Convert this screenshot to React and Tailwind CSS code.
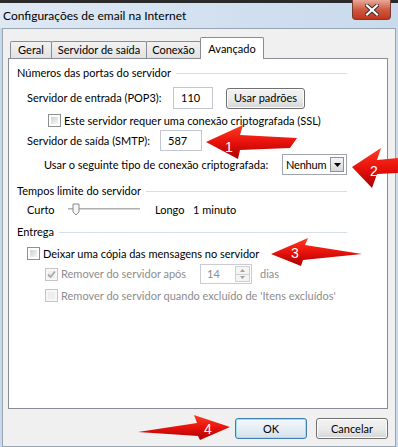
import React from 'react';

function Check({ checked, disabled }) {
  return (
    <span
      className={`relative w-[13px] h-[13px] shrink-0 border ${
        disabled ? 'border-[#c4c4c4] bg-[#f7f7f7]' : 'border-[#8e8f8f] bg-white'
      }`}
    >
      <span
        className={`absolute inset-[2px] ${
          disabled ? 'bg-[#eeeeee]' : 'bg-gradient-to-br from-[#cdd0d6] to-[#f7f7f7]'
        }`}
      />
      {checked && (
        <svg className="absolute inset-0" width="11" height="11" viewBox="0 0 11 11">
          <path d="M2 5.5 L4.5 8 L9 2.5" fill="none" stroke={disabled ? '#a8a8a8' : '#4a5f97'} strokeWidth="1.8" />
        </svg>
      )}
    </span>
  );
}

function GroupLabel({ children }) {
  return (
    <div className="flex items-center h-[16px] pl-[8px] mr-[40px]">
      <span className="whitespace-nowrap">{children}</span>
      <span className="flex-1 ml-[5px] border-t border-[#d5dfe5]" />
    </div>
  );
}

function WinButton({ children, width, isDefault }) {
  return (
    <div
      className={`${width} h-[21px] shrink-0 whitespace-nowrap rounded-[3px] border flex items-center justify-center ${
        isDefault
          ? 'border-[#3c7fb1] bg-gradient-to-b from-[#f3f8fc] via-[#e6eef5] to-[#d3e0ea] shadow-[inset_0_0_0_1px_#9ee0f7]'
          : 'border-[#707070] bg-gradient-to-b from-[#f2f2f2] via-[#ebebeb] to-[#d6d6d6] shadow-[inset_0_0_0_1px_#fcfcfc]'
      }`}
    >
      {children}
    </div>
  );
}

function Tab({ label, width, active }) {
  if (active) {
    return (
      <div className={`${width} h-[22px] -mb-px -ml-px relative z-10 bg-white border border-b-0 border-[#898c95] rounded-t-[2px] flex items-start justify-center pt-[3px] whitespace-nowrap`}>
        {label}
      </div>
    );
  }
  return (
    <div className={`${width} h-[17px] -ml-px first:ml-0 border border-b-0 border-[#898c95] rounded-t-[2px] bg-gradient-to-b from-[#f2f2f2] to-[#e2e2e2] flex items-center justify-center whitespace-nowrap`}>
      {label}
    </div>
  );
}

function Arrows() {
  return (
    <svg className="absolute inset-0 pointer-events-none" width="398" height="447" viewBox="0 0 398 447">
      <defs>
        <linearGradient id="red" x1="0" y1="0" x2="0" y2="1">
          <stop offset="0" stopColor="#ff3b22" />
          <stop offset="0.5" stopColor="#e8120c" />
          <stop offset="1" stopColor="#a80000" />
        </linearGradient>
      </defs>
      <polygon points="206,142 243,125 240,135 297,138 290,148 240,150 238,159" fill="url(#red)" />
      <polygon points="352,167 381,148 377,160 398,158 398,173 377,174 372,188" fill="url(#red)" />
      <polygon points="271,254 308,238 305,245 362,254 303,260 301,266" fill="url(#red)" />
      <polygon points="230,427 194,415 197,423 138,432 198,436 200,440" fill="url(#red)" />
      <g fill="#ffffff" fontFamily="'Liberation Sans', Arial, sans-serif" fontSize="14" textAnchor="middle">
        <text x="229" y="152">1</text>
        <text x="374" y="176">2</text>
        <text x="295" y="258">3</text>
        <text x="208" y="434">4</text>
      </g>
    </svg>
  );
}

export default function App() {
  return (
    <div className="relative w-[398px] h-[447px] overflow-hidden bg-[#c9d9ea] flex flex-col font-['Lato',sans-serif] text-[11px] text-black leading-[16px]">
      <div className="h-[3px] bg-[#2a2a2a]" />
      <div className="h-[25px] flex items-center pl-[3px] bg-gradient-to-r from-[#dfe9f4] via-[#d3e1f0] to-[#c8daec] text-[12px]">
        Configurações de email na Internet
      </div>
      <div className="absolute top-0 left-[352px] w-[39px] h-[20px] rounded-b-[4px] border border-[#7a3a2f] border-t-0 bg-gradient-to-b from-[#e9a898] via-[#cf5a42] to-[#c0351c] flex items-center justify-center">
        <svg width="14" height="12" viewBox="0 0 14 12">
          <path d="M2 1.5 L12 10.5 M12 1.5 L2 10.5" stroke="#3d2a2a" strokeWidth="4" strokeLinecap="square" />
          <path d="M2 1.5 L12 10.5 M12 1.5 L2 10.5" stroke="#ffffff" strokeWidth="2.2" strokeLinecap="square" />
        </svg>
      </div>

      <div className="flex-1 mx-[2px] border border-[#9aa5b2] bg-[#f0f0f0] flex flex-col">
        <div className="flex items-end h-[21px] mt-[8px] pl-[7px]">
          <Tab label="Geral" width="w-[42px]" />
          <Tab label="Servidor de saída" width="w-[96px]" />
          <Tab label="Conexão" width="w-[55px]" />
          <Tab label="Avançado" width="w-[64px]" active />
        </div>

        <div className="h-[351px] ml-[5px] mr-[7px] bg-white border border-[#898c95] flex flex-col pt-[6px] whitespace-nowrap">
          <GroupLabel>Números das portas do servidor</GroupLabel>

          <div className="flex items-center h-[22px] mt-[6px] pl-[18px]">
            <span className="w-[146px] shrink-0">Servidor de entrada (POP3):</span>
            <div className="w-[40px] h-[22px] shrink-0 border border-[#c3c7cf] bg-white flex items-center pl-[7px]">110</div>
            <div className="ml-[13px]">
              <WinButton width="w-[79px]">Usar padrões</WinButton>
            </div>
          </div>

          <div className="flex items-center gap-[3px] h-[13px] mt-[5px] pl-[39px]">
            <Check />
            <span>Este servidor requer uma conexão criptografada (SSL)</span>
          </div>

          <div className="flex items-center h-[21px] mt-[3px] pl-[18px]">
            <span className="w-[133px] shrink-0">Servidor de saída (SMTP):</span>
            <div className="w-[42px] h-[21px] shrink-0 border border-[#c3c7cf] bg-white flex items-center pl-[7px]">587</div>
          </div>

          <div className="flex items-center h-[21px] mt-[3px] pl-[35px]">
            <span className="w-[238px] shrink-0">Usar o seguinte tipo de conexão criptografada:</span>
            <div className="w-[65px] h-[21px] shrink-0 border border-[#a0a4ac] bg-white flex items-center justify-between pl-[3px] pr-[2px]">
              <span className="tracking-[-0.2px]">Nenhum</span>
              <div className="w-[14px] h-[15px] shrink-0 border border-[#8d9199] bg-gradient-to-b from-[#f4f4f4] to-[#d8d8d8] flex items-center justify-center">
                <svg width="7" height="4" viewBox="0 0 7 4">
                  <path d="M0 0 H7 L3.5 4 Z" fill="#000" />
                </svg>
              </div>
            </div>
          </div>

          <div className="mt-[8px]">
            <GroupLabel>Tempos limite do servidor</GroupLabel>
          </div>

          <div className="flex items-center h-[16px] mt-[3px] pl-[18px]">
            <span className="w-[41px] shrink-0">Curto</span>
            <svg width="72" height="14" viewBox="0 0 72 14">
              <rect x="0" y="5" width="72" height="2" fill="#d6d6d6" />
              <rect x="0" y="5" width="72" height="1" fill="#b0b0b0" />
              <path d="M5 1 H11 V9 L8 12 L5 9 Z" fill="#f4f4f4" stroke="#8a8a8a" strokeWidth="1" />
            </svg>
            <span className="ml-[15px] w-[38px] shrink-0">Longo</span>
            <span>1 minuto</span>
          </div>

          <div className="mt-[6px]">
            <GroupLabel>Entrega</GroupLabel>
          </div>

          <div className="flex items-center gap-[3px] h-[13px] mt-[7px] pl-[18px]">
            <Check />
            <span>Deixar uma cópia das mensagens no servidor</span>
          </div>

          <div className="flex items-center h-[20px] mt-[4px] pl-[36px] text-[#8d8d8d]">
            <Check checked disabled />
            <span className="w-[139px] shrink-0 ml-[3px]">Remover do servidor após</span>
            <div className="w-[52px] h-[20px] shrink-0 border border-[#c9ccd2] bg-white flex items-center justify-between pl-[6px] pr-[1px]">
              <span>14</span>
              <div className="w-[15px] h-[16px] flex flex-col border border-[#d0d0d0]">
                <div className="flex-1 flex items-center justify-center bg-[#f4f4f4] border-b border-[#d0d0d0]">
                  <svg width="5" height="3" viewBox="0 0 5 3"><path d="M0 3 H5 L2.5 0 Z" fill="#a0a0a0" /></svg>
                </div>
                <div className="flex-1 flex items-center justify-center bg-[#f4f4f4]">
                  <svg width="5" height="3" viewBox="0 0 5 3"><path d="M0 0 H5 L2.5 3 Z" fill="#a0a0a0" /></svg>
                </div>
              </div>
            </div>
            <span className="ml-[8px]">dias</span>
          </div>

          <div className="flex items-center gap-[3px] h-[13px] mt-[5px] pl-[36px] text-[#8d8d8d]">
            <Check disabled />
            <span>Remover do servidor quando excluído de 'Itens excluídos'</span>
          </div>
        </div>

        <div className="flex justify-end gap-[9px] mt-[9px] mr-[7px]">
          <WinButton width="w-[72px]" isDefault>OK</WinButton>
          <WinButton width="w-[72px]">Cancelar</WinButton>
        </div>
      </div>

      <Arrows />
    </div>
  );
}
